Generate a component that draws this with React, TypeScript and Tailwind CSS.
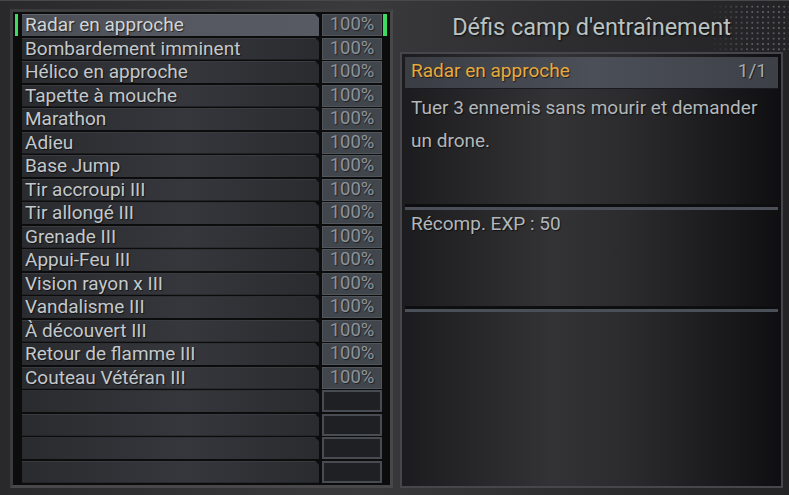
import React from 'react';

const challenges = [
  'Radar en approche',
  'Bombardement imminent',
  'Hélico en approche',
  'Tapette à mouche',
  'Marathon',
  'Adieu',
  'Base Jump',
  'Tir accroupi III',
  'Tir allongé III',
  'Grenade III',
  'Appui-Feu III',
  'Vision rayon x III',
  'Vandalisme III',
  'À découvert III',
  'Retour de flamme III',
  'Couteau Vétéran III',
];

type Row = { name: string; pct: string } | null;

const rows: Row[] = [...challenges.map((name) => ({ name, pct: '100%' })), null, null, null, null];

const ChallengeRow: React.FC<{ row: Row; selected: boolean }> = ({ row, selected }) => (
  <div className="flex h-[22px] items-stretch">
    <div className={selected ? 'w-[3px] bg-[#3ddc5e]' : 'w-[3px]'} />
    <div
      className={
        selected
          ? 'ml-[4px] w-[297px] pl-[3px] border-t border-[#62656c] bg-[linear-gradient(to_right,#4a4d54,#555860_50%,#575a62)] [clip-path:polygon(0_0,calc(100%-4px)_0,100%_4px,100%_100%,0_100%)] text-[#d0d5d8]'
          : 'ml-[4px] w-[297px] pl-[3px] border-t border-[#3a3b40] bg-[linear-gradient(to_right,#2a2b2f,#36373c_55%,#2a2b2f)] [clip-path:polygon(0_0,calc(100%-4px)_0,100%_4px,100%_100%,0_100%)] text-[#c3c8cb]'
      }
    >
      {row && (
        <span className="block whitespace-nowrap text-[19px] leading-[19px] [text-shadow:1px_1px_1px_rgba(0,0,0,0.6)]">
          {row.name}
        </span>
      )}
    </div>
    {row ? (
      <div className="ml-[3px] w-[60px] border border-[#50555c] bg-[#41454c] text-center text-[18.5px] leading-[18px] text-[#8d9399] [text-shadow:1px_1px_1px_rgba(0,0,0,0.5)]">
        {row.pct}
      </div>
    ) : (
      <div className="ml-[3px] w-[60px] border-2 border-[#474c53] bg-[#1f2024]" />
    )}
    <div className={selected ? 'ml-[1px] w-[4px] bg-[#3ddc5e]' : 'ml-[1px] w-[4px]'} />
  </div>
);

export default function App() {
  return (
    <div className="flex h-[495px] w-[789px] overflow-hidden border-t border-[#48484b] bg-[linear-gradient(to_right,#29292b,#3a3a3d_45%,#2e2e30_70%,#232325)] font-['Roboto',sans-serif]">
      {/* challenge list */}
      <div className="ml-[10px] mt-[8px] h-[479px] w-[383px] border-[3px] border-[#3c3c3f] border-r-[#48484b] border-b-[#48484b] bg-[#0c0c0d]">
        <div className="flex h-full flex-col justify-between pl-[2px] pr-[3px] py-[2px]">
          {rows.map((row, i) => (
            <ChallengeRow key={i} row={row} selected={i === 0} />
          ))}
        </div>
      </div>

      {/* details */}
      <div className="relative flex flex-1 flex-col pl-[7px] pr-[6px]">
        <div className="pointer-events-none absolute right-0 top-[3px] h-[48px] w-[82px] bg-[radial-gradient(circle,#5c5c62_0.8px,transparent_1.3px)] bg-[length:5.33px_5.33px] [mask-image:linear-gradient(to_right,transparent,black_55%)]" />
        <div className="relative h-[51px] pt-[13px] text-center text-[23.5px] leading-[27px] text-[#bac3c3] [text-shadow:1px_1px_2px_rgba(0,0,0,0.8)]">
          Défis camp d'entraînement
        </div>
        <div className="flex h-[436px] flex-col border-2 border-[#47474b] bg-[linear-gradient(to_right,#1c1c1e,#333336_40%,#2b2b2e_60%,#0f0f11)] p-[3px]">
          <div className="flex h-[32px] items-center justify-between border-b border-[#1a1b1e] bg-[linear-gradient(to_right,#3a3d44,#4b4f57_50%,#3d4047)] px-[6px] pb-[2px] text-[19px] [text-shadow:1px_1px_1px_rgba(0,0,0,0.6)]">
            <span className="text-[#e8aa3c]">Radar en approche</span>
            <span className="pr-[5px] text-[#a3a9ad]">1/1</span>
          </div>
          <div className="h-[115px] px-[6px] pt-[2px] text-[19px] leading-[33px] text-[#b2b7ba] [text-shadow:1px_1px_1px_rgba(0,0,0,0.6)]">
            Tuer 3 ennemis sans mourir et demander
            <br />
            un drone.
          </div>
          <div className="h-[3px] bg-[#0e0e10]" />
          <div className="h-[3px] bg-[#4b5058]" />
          <div className="h-[96px] px-[6px] pt-[2px] text-[19px] leading-[24px] text-[#b2b7ba] [text-shadow:1px_1px_1px_rgba(0,0,0,0.6)]">
            Récomp. EXP : 50
          </div>
          <div className="h-[3px] bg-[#0e0e10]" />
          <div className="h-[3px] bg-[#4b5058]" />
          <div className="flex-1" />
        </div>
      </div>
    </div>
  );
}
